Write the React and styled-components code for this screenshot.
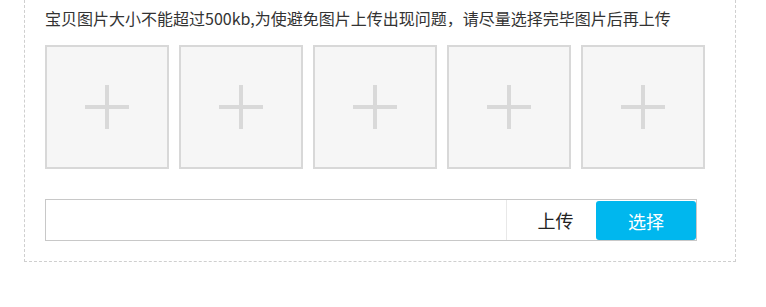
import React from "react";
import styled, { createGlobalStyle } from "styled-components";

const Global = createGlobalStyle`
  html, body { margin: 0; padding: 0; background: #fff; }
  body { font-family: "Microsoft YaHei", "Noto Sans CJK SC", "Noto Sans", sans-serif; }
  * { box-sizing: border-box; }
`;

const Panel = styled.div`
  margin-left: 24px;
  width: 712px;
  border: 1px dashed #cfcfcf;
  border-top: none;
  padding: 6px 0 20px 20px;
`;

const Notice = styled.p`
  margin: 0;
  font-size: 16px;
  line-height: 24px;
  color: #333;
  white-space: nowrap;
`;

const Grid = styled.div`
  display: flex;
  gap: 10px;
  margin-top: 15px;
`;

const Slot = styled.div`
  position: relative;
  width: 124px;
  height: 124px;
  border: 2px solid #d8d8d8;
  background: #f6f6f6;
  display: flex;
  align-items: center;
  justify-content: center;
  cursor: pointer;
`;

const Plus = styled.span`
  position: relative;
  width: 44px;
  height: 44px;
  &::before, &::after {
    content: "";
    position: absolute;
    background: #d9d9d9;
  }
  &::before { left: 0; right: 0; top: 20px; height: 4px; }
  &::after { top: 0; bottom: 0; left: 20px; width: 4px; }
`;

const UploadRow = styled.div`
  display: flex;
  margin-top: 30px;
  width: 652px;
  height: 42px;
  border: 1px solid #c8c8c8;
`;

const PathInput = styled.input`
  flex: 1;
  min-width: 0;
  border: none;
  outline: none;
  padding: 0 10px;
  font: inherit;
  font-size: 14px;
  background: transparent;
`;

const UploadLabel = styled.div`
  width: 90px;
  border-left: 1px solid #e8e8e8;
  display: flex;
  align-items: center;
  justify-content: center;
  padding-left: 8px;
  font-size: 18px;
  color: #222;
`;

const ChooseButton = styled.button`
  align-self: flex-end;
  width: 100px;
  height: 39px;
  border: none;
  border-radius: 3px;
  background: #00b7ee;
  color: #fff;
  font: inherit;
  font-size: 18px;
  cursor: pointer;
  padding: 0;
`;

export default function App() {
  return (
    <>
      <Global />
      <Panel>
        <Notice>宝贝图片大小不能超过500kb,为使避免图片上传出现问题，请尽量选择完毕图片后再上传</Notice>
        <Grid>
          {[0, 1, 2, 3, 4].map((i) => (
            <Slot key={i}>
              <Plus />
            </Slot>
          ))}
        </Grid>
        <UploadRow>
          <PathInput type="text" readOnly />
          <UploadLabel>上传</UploadLabel>
          <ChooseButton>选择</ChooseButton>
        </UploadRow>
      </Panel>
    </>
  );
}
